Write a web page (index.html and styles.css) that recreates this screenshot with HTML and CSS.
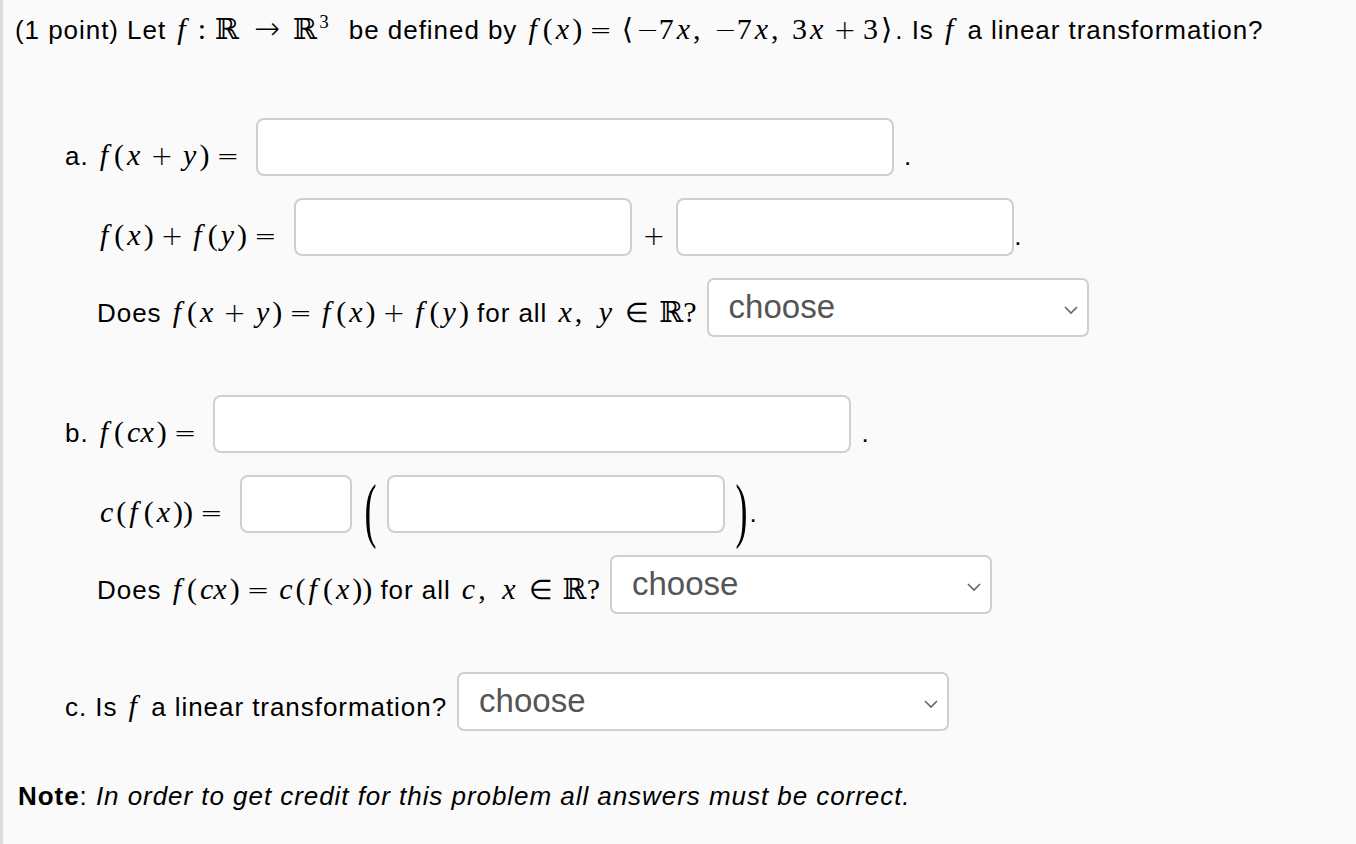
FILE: index.html
```html
<!DOCTYPE html>
<html lang="en">
<head>
    <meta charset="UTF-8">
    <title>Linear transformation problem</title>
    <link rel="stylesheet" href="styles.css">
</head>
<body>
    <div class="problem">
        <p class="intro">(1 point) Let <span class="m"><i class="f">f</i><span class="colon">:</span><span class="bb">ℝ</span><span class="op arrow">→</span><span class="bb">ℝ</span><sup>3</sup></span> be defined by <span class="m"><i class="f">f</i>(<i>x</i>)<span class="op">=</span><span class="ang">⟨</span><span class="neg">−</span>7<i>x</i>,&thinsp; <span class="neg">−</span>7<i>x</i>,&thinsp; 3<i>x</i><span class="op">+</span>3<span class="ang">⟩</span></span>. Is <span class="m"><i class="f">f</i></span> a linear transformation?</p>

        <div class="part">
            <div class="row">
                <span class="label">a. <span class="m"><i class="f">f</i>(<i>x</i><span class="op">+</span><i>y</i>)<span class="op">=</span></span></span>
                <input class="ans ans-wide" type="text">
                <span class="label dot">.</span>
            </div>
            <div class="row sub">
                <span class="label"><span class="m"><i class="f">f</i>(<i>x</i>)<span class="op">+</span><i class="f">f</i>(<i>y</i>)<span class="op">=</span></span></span>
                <input class="ans ans-mid" type="text">
                <span class="label plus"><span class="m"><span class="op-bare">+</span></span></span>
                <input class="ans ans-mid" type="text">
                <span class="label">.</span>
            </div>
            <div class="row sub row-choose">
                <span class="label">Does <span class="m"><i class="f">f</i>(<i>x</i><span class="op">+</span><i>y</i>)<span class="op">=</span><i class="f">f</i>(<i>x</i>)<span class="op">+</span><i class="f">f</i>(<i>y</i>)</span> for all <span class="m"><i>x</i>,&thinsp; <i>y</i><span class="op rel">∈</span><span class="bb">ℝ</span>?</span></span>
                <span class="pick">
                    <select class="choose"><option>choose</option><option>yes</option><option>no</option></select>
                    <svg class="chev" width="14" height="9" viewBox="0 0 14 9"><polyline points="1,1 7,7 13,1" fill="none" stroke="#666" stroke-width="1.6"/></svg>
                </span>
            </div>
        </div>

        <div class="part">
            <div class="row">
                <span class="label">b. <span class="m"><i class="f">f</i>(<i>cx</i>)<span class="op">=</span></span></span>
                <input class="ans ans-wide" type="text">
                <span class="label dot">.</span>
            </div>
            <div class="row sub">
                <span class="label"><span class="m"><i>c</i>(<i class="f">f</i>(<i>x</i>))<span class="op">=</span></span></span>
                <input class="ans ans-small" type="text">
                <span class="big-paren">(</span>
                <input class="ans ans-mid" type="text">
                <span class="big-paren close">)</span>
                <span class="label">.</span>
            </div>
            <div class="row sub row-choose">
                <span class="label">Does <span class="m"><i class="f">f</i>(<i>cx</i>)<span class="op">=</span><i>c</i>(<i class="f">f</i>(<i>x</i>))</span> for all <span class="m"><i>c</i>,&thinsp; <i>x</i><span class="op rel">∈</span><span class="bb">ℝ</span>?</span></span>
                <span class="pick">
                    <select class="choose"><option>choose</option><option>yes</option><option>no</option></select>
                    <svg class="chev" width="14" height="9" viewBox="0 0 14 9"><polyline points="1,1 7,7 13,1" fill="none" stroke="#666" stroke-width="1.6"/></svg>
                </span>
            </div>
        </div>

        <div class="part">
            <div class="row row-choose">
                <span class="label">c. Is <span class="m"><i class="f">f</i></span> a linear transformation?</span>
                <span class="pick pick-wide">
                    <select class="choose"><option>choose</option><option>yes</option><option>no</option></select>
                    <svg class="chev" width="14" height="9" viewBox="0 0 14 9"><polyline points="1,1 7,7 13,1" fill="none" stroke="#666" stroke-width="1.6"/></svg>
                </span>
            </div>
        </div>

        <p class="note"><b>Note</b>: <i>In order to get credit for this problem all answers must be correct.</i></p>
    </div>
</body>
</html>
```

FILE: styles.css
```css
body {
    margin: 0;
    background: #fafafa;
    font-family: "Liberation Sans", Arial, sans-serif;
    color: #000;
}

.problem {
    min-height: 844px;
    box-sizing: border-box;
    border-left: 3px solid #dcdcdc;
    padding: 13px 0 0 12px;
    font-size: 26px;
    letter-spacing: 0.95px;
}

.intro {
    margin: 0;
    line-height: 30px;
}

/* math bits */
.m {
    font-family: "Liberation Serif", "Times New Roman", serif;
    font-size: 30px;
    letter-spacing: 0;
}

.m i {
    font-style: italic;
    padding: 0 3px;
}

.m i.f {
    padding-right: 6px;
}

.m .op,
.m .op-bare,
.m .neg {
    font-family: "DejaVu Sans", sans-serif;
    font-size: 27px;
    font-weight: 300;
}

.m .op {
    padding: 0 7px;
}

.m .rel {
    padding: 0 10px;
}

.m .colon {
    padding: 0 9px 0 6px;
}

.m .arrow {
    font-size: 31px;
    padding: 0 13px 0 15px;
}

.m .bb,
.m .ang {
    font-family: "DejaVu Serif", serif;
    font-size: 29px;
}

.m .ang {
    padding: 0 3px;
}

.m sup {
    font-size: 19px;
    line-height: 0;
    padding: 0 12px 0 2px;
}

.part {
    margin-top: 58px;
    padding-left: 50px;
}

.intro + .part {
    margin-top: 73px;
}

.row {
    display: flex;
    align-items: flex-end;
}

.row + .row {
    margin-top: 22px;
}

.sub {
    padding-left: 32px;
}

.label {
    white-space: nowrap;
    line-height: 30px;
    margin-bottom: 5px;
}

.row-choose .label {
    margin-bottom: 9px;
}

.dot {
    margin-left: 10px;
}

.plus {
    margin: 0 11px 5px 11px;
}

.ans {
    height: 58px;
    box-sizing: border-box;
    border: 2px solid #cfcfcf;
    border-radius: 8px;
    background: #fff;
    margin: 0 0 0 10px;
    font-size: 26px;
    padding: 0 12px;
}

.ans-wide {
    width: 638px;
}

.ans-mid {
    width: 338px;
}

.plus + .ans {
    margin-left: 0;
}

.ans-small {
    width: 112px;
}

.big-paren {
    font-family: "Liberation Serif", "Times New Roman", serif;
    font-size: 36px;
    line-height: 36px;
    letter-spacing: 0;
    display: inline-block;
    transform: scaleY(2);
    transform-origin: center top;
    align-self: flex-start;
    margin: -1px 10px 0 13px;
}

.big-paren + .ans {
    margin-left: 0;
}

.big-paren.close {
    margin: -1px 2px 0 11px;
}

.pick {
    position: relative;
    display: inline-block;
    margin-left: 10px;
}

.choose {
    appearance: none;
    -webkit-appearance: none;
    width: 382px;
    height: 59px;
    box-sizing: border-box;
    border: 2px solid #cfcfcf;
    border-radius: 7px;
    background: #fff;
    color: #555;
    font-family: "Liberation Sans", Arial, sans-serif;
    font-size: 33px;
    letter-spacing: 0;
    padding: 0 0 3px 20px;
}

.pick-wide .choose {
    width: 492px;
}

.chev {
    position: absolute;
    right: 11px;
    top: 28px;
}

.note {
    margin: 50px 0 0 3px;
    line-height: 30px;
}
```
